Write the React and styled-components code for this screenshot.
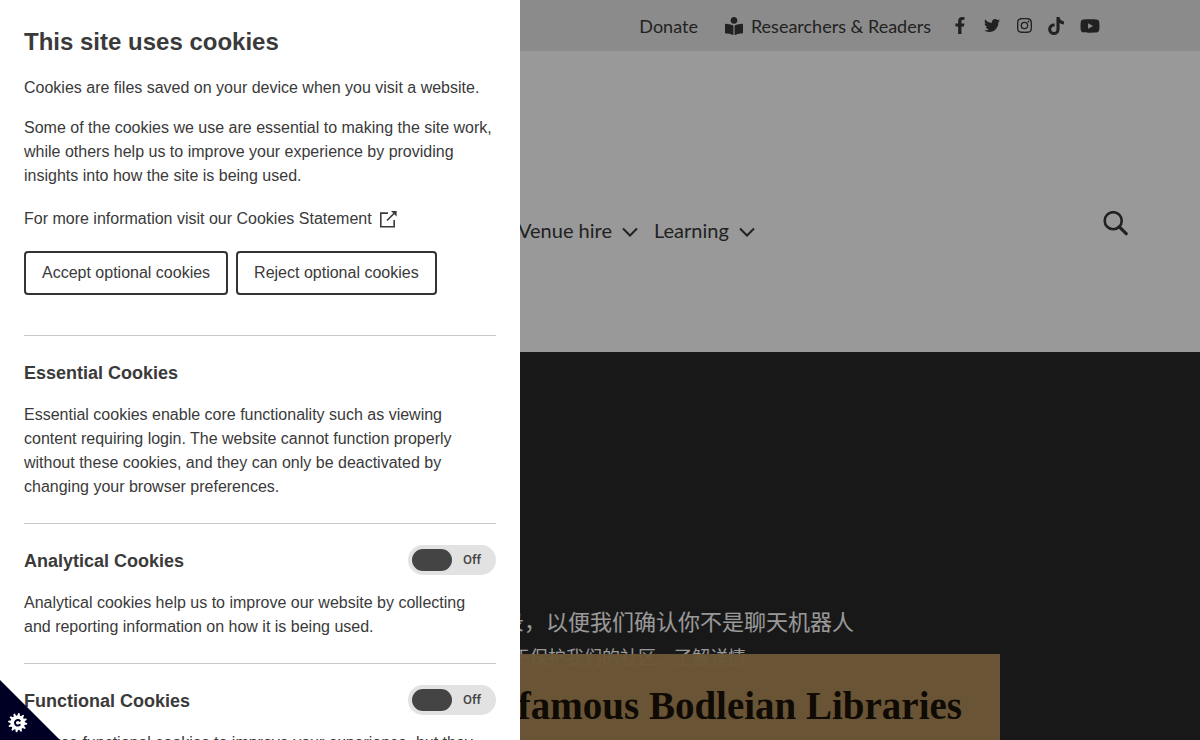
import React from "react";
import styled, { createGlobalStyle } from "styled-components";
import {
  FaBookReader,
  FaFacebookF,
  FaTwitter,
  FaTiktok,
  FaYoutube,
} from "react-icons/fa";
import { BsInstagram } from "react-icons/bs";

const GlobalStyle = createGlobalStyle`
  *, *::before, *::after { box-sizing: border-box; }
  body {
    margin: 0;
    overflow: hidden;
    background: #fff;
    color: #333;
    font-family: "Liberation Sans", Arial, sans-serif;
  }
  a { color: inherit; text-decoration: none; }
  h1, h2, h3, p, ul { margin: 0; padding: 0; }
`;

/* ---------- Site ---------- */

const Site = styled.div`
  display: flex;
  flex-direction: column;
  height: 100vh;
  font-family: Lato, sans-serif;
  color: #383838;
`;

const TopBar = styled.div`
  display: flex;
  align-items: center;
  justify-content: flex-end;
  flex: none;
  height: 51px;
  padding-right: 100px;
  background: #e8e8e8;
`;

const TopLink = styled.a`
  display: flex;
  align-items: center;
  gap: 8px;
  margin-right: ${(p) => p.$after}px;
  font-size: 18px;
  line-height: 24px;
  white-space: nowrap;
`;

const Social = styled.ul`
  display: flex;
  align-items: center;
  gap: 16px;
  list-style: none;
`;

const SocialLink = styled.a`
  display: flex;
  justify-content: center;
  width: ${(p) => p.$width || 16}px;
`;

const Header = styled.header`
  display: flex;
  justify-content: space-between;
  flex: none;
  height: 301px;
  padding: 160px 72px 0 518px;
  background: #fff;
`;

const Nav = styled.nav`
  display: flex;
  align-items: center;
  gap: 16px;
  height: 38px;
`;

const NavItem = styled.button`
  display: flex;
  align-items: center;
  gap: 10px;
  padding: 0;
  border: 0;
  background: none;
  color: inherit;
  font: 20px/24px Lato, sans-serif;
  white-space: nowrap;

  svg { margin-top: 4px; }
`;

const SearchButton = styled.button`
  display: flex;
  width: 25px;
  height: 25px;
  padding: 0;
  border: 0;
  background: none;
  color: inherit;
`;

const Hero = styled.main`
  display: flex;
  flex-direction: column;
  flex: 1;
  min-height: 388px;
  background: #282828;
`;

const VideoNotice = styled.div`
  display: flex;
  flex-direction: column;
  flex: none;
  gap: 8px;
  height: 302px;
  padding: 252px 0 0 458px;
  color: #fff;
  font-family: "Noto Sans CJK SC", sans-serif;
  white-space: nowrap;
`;

const NoticeTitle = styled.p`
  font-size: 22px;
  line-height: 32px;
`;

const NoticeText = styled.p`
  font-size: 18px;
  line-height: 24px;

  a { text-decoration: underline; }
`;

const Banner = styled.div`
  display: flex;
  flex: 1;
  justify-content: flex-end;
  z-index: 1;
  margin: 0 200px;
  padding: 28px 38px 0 0;
  background: rgba(180, 145, 93, 0.97);
`;

const BannerTitle = styled.h1`
  color: #1a1208;
  font: bold 39px/48px "Liberation Serif", serif;
  white-space: nowrap;
`;

/* ---------- Cookie dialog ---------- */

const Shade = styled.div`
  position: fixed;
  inset: 0;
  z-index: 2;
  background: rgba(0, 0, 0, 0.4);
`;

const Panel = styled.aside`
  width: 520px;
  max-width: 100%;
  height: 100%;
  padding: 24px;
  overflow: hidden;
  background: #fff;
  color: #3a3a3a;
  font-size: 16px;
  line-height: 24px;
`;

const PanelTitle = styled.h2`
  font-size: 24px;
  line-height: 36px;
`;

const Text = styled.p`
  margin-top: 16px;
`;

const StatementLink = styled.a`
  display: flex;
  align-items: center;
  gap: 8px;
  margin-top: 16px;
  line-height: 30px;
`;

const Actions = styled.div`
  display: flex;
  gap: 8px;
  margin: 17px 0 40px;
`;

const ActionButton = styled.button`
  height: 44px;
  padding: 0 16px;
  border: 2px solid #333;
  border-radius: 4px;
  background: #fff;
  color: inherit;
  font: 16px/24px "Liberation Sans", Arial, sans-serif;
`;

const Section = styled.section`
  margin-bottom: 24px;
  padding-top: 24px;
  border-top: 1px solid #c8c8c8;
`;

const SectionHead = styled.div`
  display: flex;
  align-items: flex-end;
  justify-content: space-between;
  height: 27px;
`;

const SectionTitle = styled.h3`
  font-size: 18px;
  line-height: 27px;
`;

const Toggle = styled.label`
  display: flex;
  align-items: center;
  gap: 11px;
  width: 88px;
  height: 30px;
  padding: 4px;
  border-radius: 15px;
  background: #e2e2e2;
  color: #444;
  font: 500 13px/16px Roboto, sans-serif;
`;

const ToggleInput = styled.input`
  appearance: none;
  width: 40px;
  height: 22px;
  margin: 0;
  border-radius: 11px;
  background: #444;
`;

const Corner = styled.button`
  position: fixed;
  left: 0;
  bottom: 0;
  z-index: 3;
  display: flex;
  width: 60px;
  height: 60px;
  padding: 0;
  border: 0;
  background: none;
`;

const ChevronIcon = () => (
  <svg width="16" height="10" viewBox="0 0 16 10" fill="none" stroke="currentColor" strokeWidth="2" aria-hidden="true">
    <path d="M1 1.5 8 8.5 15 1.5" />
  </svg>
);

const SearchIcon = () => (
  <svg width="25" height="25" viewBox="0 0 25 25" fill="none" stroke="currentColor" aria-hidden="true">
    <circle cx="10.2" cy="9.7" r="8.5" strokeWidth="2.6" />
    <path d="m16.3 15.8 6.9 6.9" strokeWidth="3.2" strokeLinecap="round" />
  </svg>
);

const ExternalIcon = () => (
  <svg width="17" height="17" viewBox="0 0 17 17" fill="none" stroke="currentColor" strokeWidth="1.6" aria-hidden="true">
    <path d="M8 2.1H.8v13.6h13.4V9" />
    <path d="m7 9.5 7-7" />
    <path d="M11 0h5.6v5.6z" fill="currentColor" stroke="none" />
  </svg>
);

const teeth = Array.from({ length: 24 }, (_, i) => {
  const angle = ((i + 0.5) * Math.PI) / 12;
  const radius = i % 2 ? 7.2 : 9.6;
  return [-0.07, 0.07]
    .map((d) => `${(17.7 + radius * Math.cos(angle + d)).toFixed(2)},${(42.7 + radius * Math.sin(angle + d)).toFixed(2)}`)
    .join(" ");
}).join(" ");

const CornerIcon = () => (
  <svg width="60" height="60" viewBox="0 0 60 60" aria-hidden="true">
    <path d="M0 0v60h60z" fill="#000025" />
    <polygon points={teeth} fill="#fff" />
    <path d="M20.2 41.4a2.8 2.8 0 1 0 0 2.8" fill="none" stroke="#000025" strokeWidth="2" />
  </svg>
);

function CookieSection({ title, toggle, children }) {
  return (
    <Section>
      <SectionHead>
        <SectionTitle>{title}</SectionTitle>
        {toggle && (
          <Toggle>
            <ToggleInput type="checkbox" role="switch" aria-label={title} />
            Off
          </Toggle>
        )}
      </SectionHead>
      <Text>{children}</Text>
    </Section>
  );
}

const socials = [
  { name: "Facebook", icon: <FaFacebookF size={17} /> },
  { name: "Twitter", icon: <FaTwitter size={17} /> },
  { name: "Instagram", icon: <BsInstagram size={15} /> },
  { name: "TikTok", icon: <FaTiktok size={18} /> },
  { name: "YouTube", icon: <FaYoutube size={20} />, width: 20 },
];

export default function App() {
  return (
    <>
      <GlobalStyle />
      <Site>
        <TopBar>
          <TopLink href="#" $after={27}>Donate</TopLink>
          <TopLink href="#" $after={21}>
            <FaBookReader size={18} />
            Researchers &amp; Readers
          </TopLink>
          <Social>
            {socials.map((s) => (
              <li key={s.name}>
                <SocialLink href="#" aria-label={s.name} $width={s.width}>{s.icon}</SocialLink>
              </li>
            ))}
          </Social>
        </TopBar>
        <Header>
          <Nav>
            <NavItem>Venue hire <ChevronIcon /></NavItem>
            <NavItem>Learning <ChevronIcon /></NavItem>
          </Nav>
          <SearchButton aria-label="Search"><SearchIcon /></SearchButton>
        </Header>
        <Hero>
          <VideoNotice lang="zh-CN">
            <NoticeTitle>请登录，以便我们确认你不是聊天机器人</NoticeTitle>
            <NoticeText>这有助于保护我们的社区。<a href="#">了解详情</a></NoticeText>
          </VideoNotice>
          <Banner>
            <BannerTitle>famous Bodleian Libraries</BannerTitle>
          </Banner>
        </Hero>
      </Site>
      <Shade>
        <Panel role="dialog" aria-label="Cookie preferences">
          <PanelTitle>This site uses cookies</PanelTitle>
          <Text>Cookies are files saved on your device when you visit a website.</Text>
          <Text>
            Some of the cookies we use are essential to making the site work, while others help us to
            improve your experience by providing insights into how the site is being used.
          </Text>
          <StatementLink href="#">
            For more information visit our Cookies Statement <ExternalIcon />
          </StatementLink>
          <Actions>
            <ActionButton>Accept optional cookies</ActionButton>
            <ActionButton>Reject optional cookies</ActionButton>
          </Actions>
          <CookieSection title="Essential Cookies">
            Essential cookies enable core functionality such as viewing content requiring login. The
            website cannot function properly without these cookies, and they can only be deactivated
            by changing your browser preferences.
          </CookieSection>
          <CookieSection title="Analytical Cookies" toggle>
            Analytical cookies help us to improve our website by collecting and reporting information
            on how it is being used.
          </CookieSection>
          <CookieSection title="Functional Cookies" toggle>
            We use functional cookies to improve your experience, but they
          </CookieSection>
        </Panel>
      </Shade>
      <Corner aria-label="Cookie settings"><CornerIcon /></Corner>
    </>
  );
}
